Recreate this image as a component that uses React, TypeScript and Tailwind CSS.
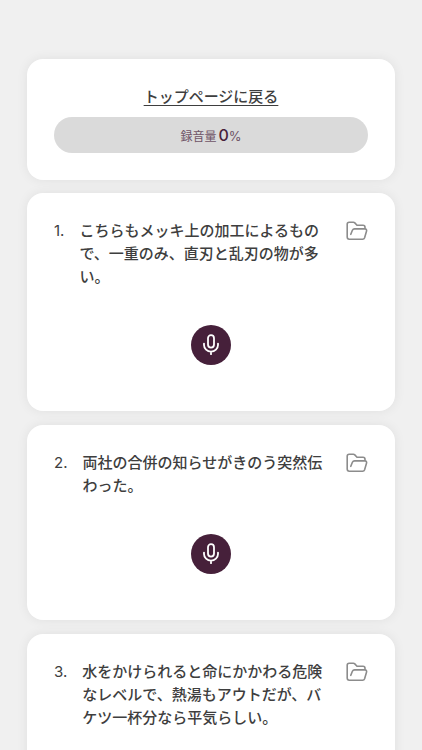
const sentences = [
  { id: 1, text: "こちらもメッキ上の加工によるもので、一重のみ、直刃と乱刃の物が多い。" },
  { id: 2, text: "両社の合併の知らせがきのう突然伝わった。" },
  { id: 3, text: "水をかけられると命にかかわる危険なレベルで、熱湯もアウトだが、バケツ一杯分なら平気らしい。" },
];

const FolderIcon = () => (
  <svg width="22" height="20" viewBox="0 0 22 20" fill="none" stroke="#8c8c8c" strokeWidth="1.6" strokeLinecap="round" strokeLinejoin="round">
    <path d="M19 7.8V6.2C19 5 18.2 4.3 17 4.3H11L8.8 1.9C8.4 1.5 8 1.3 7.4 1.3H3.2C2 1.3 1.2 2.1 1.2 3.3V16C1.2 17.4 2 18.2 3.3 18.2H16.6C17.6 18.2 18.3 17.7 18.6 16.8L20.5 10.3C20.9 8.9 20.3 7.9 19 7.9H8.6C7.5 7.9 6.8 8.4 6.4 9.3L4.8 13.3" />
  </svg>
);

const MicIcon = () => (
  <svg width="22" height="24" viewBox="0 0 22 24" fill="none" stroke="white" strokeWidth="1.8" strokeLinecap="round" strokeLinejoin="round">
    <rect x="8" y="2.2" width="6" height="12.4" rx="3" />
    <path d="M4 10.6v1.4a7 6.6 0 0 0 14 0V10.6M11 18.8V21.2" />
  </svg>
);

const SentenceCard = ({ id, text }: { id: number; text: string }) => (
  <li className="rounded-2xl bg-white px-[27px] pt-[25px] pb-[46px] shadow-[0_0_12px_rgba(0,0,0,0.07)]">
    <div className="flex items-start">
      <span className="mr-[15px] shrink-0 pt-px font-['Inter','Noto_Sans_CJK_JP',sans-serif] font-normal">{id}.</span>
      <p className="min-w-0 flex-1">{text}</p>
      <button type="button" aria-label="フォルダを開く" className="ml-5 shrink-0 cursor-pointer pt-[3px]">
        <FolderIcon />
      </button>
    </div>
    <button
      type="button"
      aria-label="録音する"
      className="mx-auto mt-[38px] flex size-10 cursor-pointer items-center justify-center rounded-full bg-[#46203a]"
    >
      <MicIcon />
    </button>
  </li>
);

const App = () => {
  return (
    <main className="min-h-screen bg-[#f0f0f0] px-[27px] pt-[59px] pb-12 font-['Noto_Sans_CJK_JP',sans-serif] text-[15px] leading-[23px] font-medium text-[#3e3e3e]" lang="ja">
      <header className="rounded-2xl bg-white px-[27px] pt-[25px] pb-[27px] text-center shadow-[0_0_12px_rgba(0,0,0,0.07)]">
        <a href="#top" className="underline underline-offset-3">
          トップページに戻る
        </a>
        <div className="mt-[10px] flex h-9 items-center justify-center gap-[2px] rounded-full bg-[#dadada] text-[12px] font-normal text-[#6e5366]">
          <span>録音量</span>
          <p className="font-['Inter',sans-serif] text-[13px]">
            <span className="text-base font-medium text-[#46203a]">0</span>%
          </p>
        </div>
      </header>
      <ol className="mt-[13px] flex flex-col gap-[14px]">
        {sentences.map((sentence) => (
          <SentenceCard key={sentence.id} {...sentence} />
        ))}
      </ol>
    </main>
  );
};

export default App;
